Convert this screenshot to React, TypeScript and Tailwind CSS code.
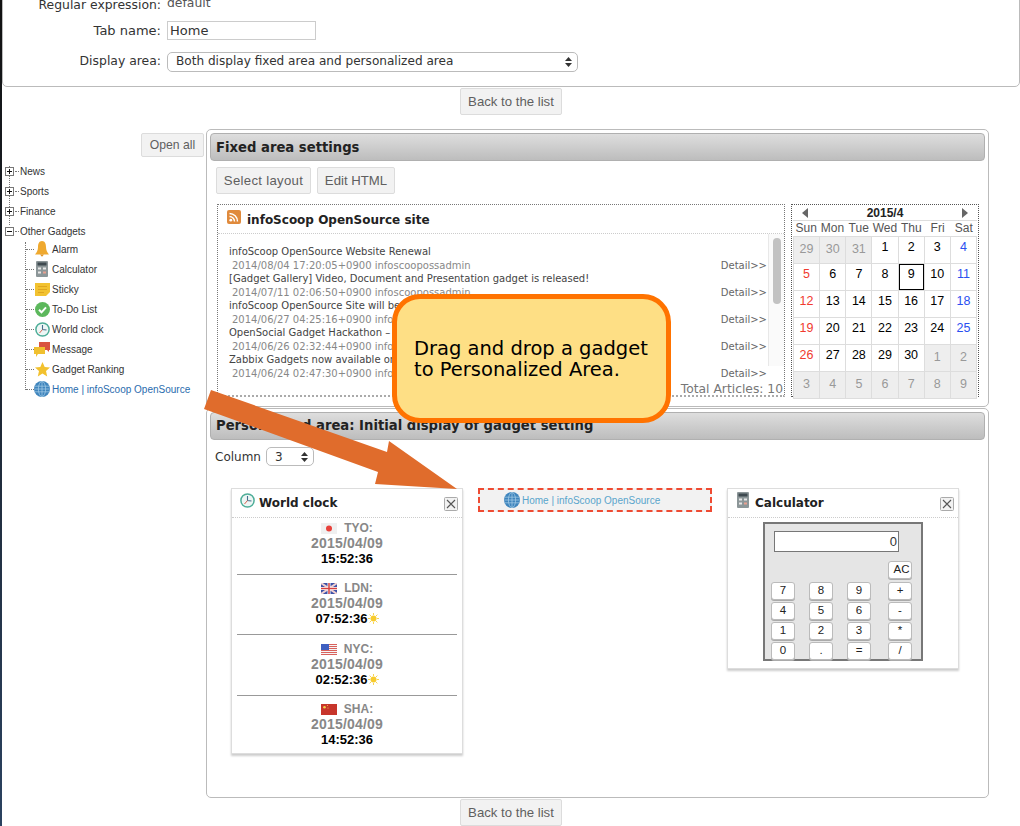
const verdana = "font-['DejaVu_Sans',Verdana,sans-serif]";

function PlusBox({ minus }: { minus?: boolean }) {
  return (
    <svg width="9" height="9" viewBox="0 0 9 9" className="shrink-0">
      <rect x="0.5" y="0.5" width="8" height="8" fill="#fff" stroke="#777" />
      <path d="M2 4.5h5" stroke="#111" />
      {!minus && <path d="M4.5 2v5" stroke="#111" />}
    </svg>
  );
}

function Bell() {
  return (
    <svg width="16" height="16" viewBox="0 0 16 16">
      <path d="M8 0c3 0 4 3 4 6 0 3 1 5 3 7.500H1c2-2.500 3-4.500 3-7.500 0-3 1-6 4-6z" fill="#efa92f" />
      <path d="M6 13.500h4L8 15.800z" fill="#e0901e" />
    </svg>
  );
}

function CalcIcon() {
  return (
    <svg width="12" height="16" viewBox="0 0 12 16">
      <rect x="0" y="0" width="12" height="16" rx="1" fill="#8c9698" />
      <rect x="1.500" y="1.500" width="9" height="3" fill="#3f4a50" />
      <rect x="2" y="6.500" width="3" height="2" fill="#e8e8e8" />
      <rect x="7" y="6.500" width="3" height="2" fill="#e8e8e8" />
      <rect x="2" y="10.500" width="3" height="2" fill="#e8e8e8" />
      <rect x="7" y="10.500" width="3" height="2" fill="#e8a090" />
    </svg>
  );
}

function StickyIcon() {
  return (
    <svg width="15" height="14" viewBox="0 0 15 14">
      <path d="M0 1h15v9l-4 4H0z" fill="#f2c230" />
      <path d="M3 4.500h9M3 7.500h9M3 10.500h6" stroke="#dfa51f" />
    </svg>
  );
}

function CheckIcon() {
  return (
    <svg width="15" height="15" viewBox="0 0 15 15">
      <circle cx="7.500" cy="7.500" r="7.500" fill="#5cb85c" />
      <path d="M4 7.800l2.500 2.500 4.500-5" fill="none" stroke="#fff" strokeWidth="2" />
    </svg>
  );
}

function ClockIcon() {
  return (
    <svg width="15" height="15" viewBox="0 0 15 15">
      <circle cx="7.500" cy="7.500" r="6.600" fill="#eef6f5" stroke="#4fae99" strokeWidth="1.500" />
      <path d="M7.500 3v4.500l4 .5" fill="none" stroke="#44708f" strokeWidth="1.100" />
      <path d="M7.500 7.500L4.500 11" stroke="#d9604c" />
    </svg>
  );
}

function MessageIcon() {
  return (
    <svg width="16" height="15" viewBox="0 0 16 15">
      <path d="M5 0h11v8h-1v2l-2-2H5z" fill="#d9533f" />
      <path d="M0 5h11v7H4l-2 3v-3H0z" fill="#f0c02f" />
    </svg>
  );
}

function StarIcon() {
  return (
    <svg width="15" height="15" viewBox="0 0 15 15">
      <path d="M7.500 0l2.200 5 5.300.5-4 3.500 1.200 5.500-4.700-2.900-4.700 2.900L4 9 0 5.500 5.300 5z" fill="#f2c12e" />
    </svg>
  );
}

function GlobeIcon() {
  return (
    <svg width="16" height="16" viewBox="0 0 16 16" className="shrink-0">
      <circle cx="8" cy="8" r="8" fill="#3f85bd" />
      <g fill="none" stroke="#a9d0ea" strokeWidth="0.7">
        <ellipse cx="8" cy="8" rx="3.600" ry="7.600" />
        <path d="M8 .4v15.200M.6 5.200h14.800M.6 10.800h14.800M.4 8h15.200" />
      </g>
    </svg>
  );
}

function RssIcon() {
  return (
    <svg width="14" height="14" viewBox="0 0 14 14" className="-mt-[6px] shrink-0">
      <rect width="14" height="14" rx="2" fill="#e08a3c" />
      <circle cx="3.800" cy="10.200" r="1.400" fill="#fff" />
      <path d="M2.500 6.500a5 5 0 0 1 5 5M2.500 3.500a8 8 0 0 1 8 8" fill="none" stroke="#fff" strokeWidth="1.400" />
    </svg>
  );
}

function CloseBox() {
  return (
    <svg width="14" height="14" viewBox="0 0 14 14" className="shrink-0">
      <rect x="0.500" y="0.500" width="13" height="13" rx="1" fill="#f2f2f2" stroke="#aaa" />
      <path d="M3 3l8 8M11 3l-8 8" stroke="#555" strokeWidth="1.100" />
    </svg>
  );
}

function Sun() {
  return (
    <svg width="11" height="11" viewBox="0 0 11 11" className="shrink-0">
      <circle cx="5.500" cy="5.500" r="3" fill="#f7cb2d" />
      <path d="M5.500 0v2M5.500 9v2M0 5.500h2M9 5.500h2M1.600 1.600L3 3M8 8l1.400 1.400M1.600 9.400L3 8M8 3l1.400-1.400" stroke="#f7cf3d" strokeWidth="0.900" />
    </svg>
  );
}

function Flag({ city }: { city: string }) {
  if (city === "TYO")
    return (
      <svg width="16" height="11" viewBox="0 0 16 11" className="shrink-0">
        <rect width="16" height="11" fill="#f0f0f0" />
        <circle cx="8" cy="5.500" r="3" fill="#e8413b" />
      </svg>
    );
  if (city === "LDN")
    return (
      <svg width="16" height="11" viewBox="0 0 16 11" className="shrink-0">
        <rect width="16" height="11" fill="#3d52a8" />
        <path d="M0 0l16 11M16 0L0 11" stroke="#f0d0d0" strokeWidth="2" />
        <path d="M8 0v11M0 5.500h16" stroke="#fff" strokeWidth="3" />
        <path d="M8 0v11M0 5.500h16" stroke="#d5403f" strokeWidth="1.500" />
      </svg>
    );
  if (city === "NYC")
    return (
      <svg width="16" height="11" viewBox="0 0 16 11" className="shrink-0">
        <rect width="16" height="11" fill="#f5f5f5" />
        <path d="M0 .5h16M0 2.500h16M0 4.500h16M0 6.500h16M0 8.500h16M0 10.500h16" stroke="#d9615c" />
        <rect width="8" height="6" fill="#3f5fc0" />
      </svg>
    );
  return (
    <svg width="16" height="11" viewBox="0 0 16 11" className="shrink-0">
      <rect width="16" height="11" fill="#c7352b" />
      <circle cx="3.500" cy="3.200" r="1.300" fill="#f3d24b" />
      <circle cx="6.500" cy="1.500" r="0.500" fill="#f3d24b" />
      <circle cx="7" cy="4" r="0.500" fill="#f3d24b" />
    </svg>
  );
}

function Btn({ children, className = "" }: { children: React.ReactNode; className?: string }) {
  return (
    <button className={`flex items-center justify-center rounded-[2px] border border-[#dcdcdc] bg-[#f2f2f2] font-['Liberation_Sans',Arial,sans-serif] text-[#5f5f5f] ${className}`}>
      {children}
    </button>
  );
}

function SectionHead({ children }: { children: React.ReactNode }) {
  return (
    <div className={`flex h-[28px] items-center rounded-[4px] border border-[#b0b0b0] bg-gradient-to-b from-[#dedede] to-[#bdbdbd] px-[5px] text-[13.200px] font-bold text-[#222] ${verdana}`}>
      {children}
    </div>
  );
}

function UpDown() {
  return (
    <svg width="7" height="10" viewBox="0 0 7 10" className="shrink-0">
      <path d="M3.500 0L7 4H0zM3.500 10L0 6h7z" fill="#333" />
    </svg>
  );
}

const folders = ["News", "Sports", "Finance"];

const gadgets = [
  { name: "Alarm", icon: <Bell /> },
  { name: "Calculator", icon: <CalcIcon /> },
  { name: "Sticky", icon: <StickyIcon /> },
  { name: "To-Do List", icon: <CheckIcon /> },
  { name: "World clock", icon: <ClockIcon /> },
  { name: "Message", icon: <MessageIcon /> },
  { name: "Gadget Ranking", icon: <StarIcon /> },
];

function Tree() {
  return (
    <div className="relative mt-[4px] font-['Liberation_Sans',Arial,sans-serif] text-[10px] text-[#333]">
      <div className="absolute left-[9px] top-[5px] h-[59px] border-l border-dotted border-[#777]" />
      <div className="absolute left-[25px] top-[81px] h-[148px] border-l border-dotted border-[#777]" />
      {folders.map((f) => (
        <div key={f} className="relative flex h-[20px] items-center pl-[5px]">
          <PlusBox />
          <span className="mx-[1px] w-[4px] border-t border-dotted border-[#777]" />
          <span>{f}</span>
        </div>
      ))}
      <div className="relative flex h-[20px] items-center pl-[5px]">
        <PlusBox minus />
        <span className="mx-[1px] w-[4px] border-t border-dotted border-[#777]" />
        <span>Other Gadgets</span>
      </div>
      <div className="-mt-[2px]">
        {gadgets.map((g) => (
          <div key={g.name} className="flex h-[20px] items-center pl-[26px]">
            <span className="w-[8px] border-t border-dotted border-[#777]" />
            <span className="flex w-[18px] justify-center pr-[2px]">{g.icon}</span>
            <span>{g.name}</span>
          </div>
        ))}
        <div className="flex h-[20px] items-center pl-[26px]">
          <span className="w-[8px] border-t border-dotted border-[#777]" />
          <GlobeIcon />
          <span className="ml-[2px] text-[#2a6cae]">Home | infoScoop OpenSource</span>
        </div>
      </div>
    </div>
  );
}

const articles = [
  ["infoScoop OpenSource Website Renewal", "2014/08/04 17:20:05+0900 infoscoopossadmin"],
  ["[Gadget Gallery] Video, Document and Presentation gadget is released!", "2014/07/11 02:06:50+0900 infoscoopossadmin"],
  ["infoScoop OpenSource Site will be", "2014/06/27 04:25:16+0900 infoscoopossadmin"],
  ["OpenSocial Gadget Hackathon – ", "2014/06/26 02:32:44+0900 infoscoopossadmin"],
  ["Zabbix Gadgets now available on", "2014/06/24 02:47:30+0900 infoscoopossadmin"],
];

function RssGadget() {
  return (
    <div className={`relative h-[193px] w-[568px] overflow-hidden border-x border-t border-dotted border-[#777] border-b-2 border-b-[#aaa] ${verdana}`}>
      <div className="flex h-[29px] items-center gap-[4px] border-b border-dotted border-[#ccc] pl-[9px] pt-[2px]">
        <RssIcon />
        <span className="ml-[2px] text-[12px] font-bold text-[#222]">infoScoop OpenSource site</span>
      </div>
      <div className="flex h-[132px]">
        <div className="w-[550px] pl-[11px] pt-[11px] text-[10px] leading-[13.500px]">
          {articles.map(([title, meta]) => (
            <div key={meta}>
              <div className="whitespace-nowrap text-[#444]">{title}</div>
              <div className="flex justify-between whitespace-nowrap pl-[3px] text-[#888]">
                <span>{meta}</span>
                <span className="pr-[1px] text-[#666]">Detail&gt;&gt;</span>
              </div>
            </div>
          ))}
        </div>
        <div className="w-[16px] border-l border-[#e8e8e8] bg-[#fafafa] pl-[4px] pt-[4px]">
          <div className="h-[66px] w-[8px] rounded-[4px] bg-[#c2c2c2]" />
        </div>
      </div>
      <div className="absolute bottom-[-2px] right-[1px] bg-white pl-[1px] text-[12.300px] leading-[16px] text-[#777]">Total Articles: 10</div>
    </div>
  );
}

const dayNames = ["Sun", "Mon", "Tue", "Wed", "Thu", "Fri", "Sat"];
const days = [
  29, 30, 31, 1, 2, 3, 4, 5, 6, 7, 8, 9, 10, 11, 12, 13, 14, 15, 16, 17, 18, 19, 20, 21, 22, 23, 24, 25, 26, 27, 28, 29, 30, 1, 2, 3, 4, 5, 6, 7, 8, 9,
];

function dayClass(i: number) {
  if (i < 3 || i >= 33) return "bg-[#eeeeee] text-[#999] pt-[3px]";
  if (i % 7 === 0) return "bg-white text-[#f03a2e]";
  if (i % 7 === 6) return "bg-white text-[#2a4ff0]";
  return "bg-white text-black";
}

function Calendar() {
  return (
    <div className="h-[193px] w-[188px] border border-dotted border-[#555] p-[1px] font-['Liberation_Sans',Arial,sans-serif]">
      <div className="flex h-[14px] items-center justify-between px-[9px] text-[12px] font-bold leading-none text-[#222]">
        <svg width="6" height="10" viewBox="0 0 6 10"><path d="M6 0v10L0 5z" fill="#666" /></svg>
        <span>2015/4</span>
        <svg width="6" height="10" viewBox="0 0 6 10"><path d="M0 0v10l6-5z" fill="#666" /></svg>
      </div>
      <div className="grid grid-cols-7 border-t border-[#ddd] text-center text-[12px] leading-[15px] text-[#555]">
        {dayNames.map((d) => (
          <span key={d} className="whitespace-nowrap">{d}</span>
        ))}
      </div>
      <div className="grid grid-cols-7 gap-[1px] bg-[#dddddd] p-[1px] text-center text-[12.500px]">
        {days.map((d, i) => (
          <div key={i} className={`flex h-[26px] justify-center pt-[1px] ${i === 11 ? "outline outline-1 -outline-offset-1 outline-black" : ""} ${dayClass(i)}`}>
            {d}
          </div>
        ))}
      </div>
    </div>
  );
}

const clocks = [
  { city: "TYO", date: "2015/04/09", time: "15:52:36", sun: false, pad: "" },
  { city: "LDN", date: "2015/04/09", time: "07:52:36", sun: true, pad: "pt-[6px]" },
  { city: "NYC", date: "2015/04/09", time: "02:52:36", sun: true, pad: "pt-[7px]" },
  { city: "SHA", date: "2015/04/09", time: "14:52:36", sun: false, pad: "pt-[6px]" },
];

function CardHead({ icon, title }: { icon: React.ReactNode; title: string }) {
  return (
    <div className={`flex h-[29px] items-center border-b border-dotted border-[#ccc] pl-[7px] pr-[4px] text-[12px] font-bold text-[#222] ${verdana}`}>
      <span className="-mt-[6px] mr-[4px] flex w-[16px] justify-center">{icon}</span>
      <span className="-mt-[1px]">{title}</span>
      <span className="ml-auto pt-[2px]"><CloseBox /></span>
    </div>
  );
}

function WorldClock() {
  return (
    <div className="h-[266px] w-[232px] shrink-0 border border-[#ddd] shadow-[0_2px_2px_rgba(0,0,0,0.2)]">
      <CardHead icon={<ClockIcon />} title="World clock" />
      <div className="px-[5px] pt-[3px] font-['Liberation_Sans',Arial,sans-serif] text-[12px] leading-[15px]">
        {clocks.map((c, i) => (
          <div key={c.city} className={`pb-[8px] text-center ${c.pad} ${i < 3 ? "border-b border-[#999]" : ""}`}>
            <div className="flex items-center justify-center gap-[7px] font-bold text-[#888]">
              <Flag city={c.city} />
              <span>{c.city}:</span>
            </div>
            <div className="text-[14px] font-bold tracking-[0.2px] text-[#888]">{c.date}</div>
            <div className="flex items-center justify-center text-[13px] font-bold text-black">
              {c.time}
              {c.sun && <Sun />}
            </div>
          </div>
        ))}
      </div>
    </div>
  );
}

const calcRows = [
  ["7", "8", "9", "+"],
  ["4", "5", "6", "-"],
  ["1", "2", "3", "*"],
  ["0", ".", "=", "/"],
];

function CalcKey({ label, className = "" }: { label: string; className?: string }) {
  return (
    <div className={`flex h-[18px] w-[24px] items-center justify-center rounded-[3px] border border-[#bbb] bg-white text-[11.500px] leading-none text-[#222] shadow-[0_1px_0_#aaa] ${className}`}>
      {label}
    </div>
  );
}

function Calculator() {
  return (
    <div className="h-[181px] w-[232px] shrink-0 border border-[#ddd] shadow-[0_2px_2px_rgba(0,0,0,0.2)]">
      <CardHead icon={<CalcIcon />} title="Calculator" />
      <div className="pl-[35px] pt-[4px]">
        <div className="h-[139px] w-[160px] border-2 border-[#777] bg-[#e5e5e5] pl-[6px] pt-[7px] font-['Liberation_Sans',Arial,sans-serif]">
          <div className="ml-[3px] h-[21px] w-[125px] border border-[#777] bg-white pr-[1px] text-right text-[13px] leading-[19px] text-[#333]">0</div>
          <div className="mt-[9px] grid w-[141px] grid-cols-[38px_38px_41px_24px] gap-y-[2px]">
            <CalcKey label="AC" className="col-start-4 mb-[1px] pl-[3px]" />
            {calcRows.flat().map((k) => (
              <CalcKey key={k} label={k} />
            ))}
          </div>
        </div>
      </div>
    </div>
  );
}

export default function App() {
  return (
    <div className={`relative h-[826px] w-[1020px] overflow-hidden bg-white ${verdana}`}>
      <div className="absolute inset-y-0 left-0 w-[2px] bg-gradient-to-b from-[#111] to-[#2b4260]" />

      <div className="ml-[2px] -mt-[4px] h-[91px] rounded-b-[5px] border border-[#bbb] text-[12.400px] text-[#333]">
        <div className="flex h-[16px] items-center">
          <span className="w-[158px] text-right">Regular expression:</span>
          <span className="ml-[6px] -mt-[3px] text-[#555]">default</span>
        </div>
        <div className="mt-[8px] flex items-center">
          <span className="w-[158px] text-right text-[13px]">Tab name:</span>
          <input readOnly value="Home" className="ml-[6px] h-[19px] w-[149px] border border-[#ccc] px-[2px] text-[13px] text-[#333]" />
        </div>
        <div className="mt-[11px] flex items-center">
          <span className="w-[158px] text-right">Display area:</span>
          <div className="ml-[6px] flex h-[20px] w-[411px] items-center justify-between rounded-[5px] border border-[#bbb] pl-[8px] pr-[5px] text-[12.100px]">
            <span>Both display fixed area and personalized area</span>
            <UpDown />
          </div>
        </div>
      </div>

      <div className="mt-[1px] flex justify-center pl-[2px]">
        <Btn className="h-[27px] w-[102px] text-[13.200px]">Back to the list</Btn>
      </div>

      <div className="mt-[14px] flex">
        <div className="w-[206px] shrink-0">
          <div className="mt-[4px] flex justify-end pr-[2px]">
            <Btn className="h-[24px] w-[63px] text-[12.200px]">Open all</Btn>
          </div>
          <Tree />
        </div>

        <div className="w-[783px] shrink-0">
          <div className="h-[278px] rounded-[5px] border border-[#bbb] px-[3px] pt-[3px]">
            <SectionHead><span className="pt-[1px]">Fixed area settings</span></SectionHead>
            <div className="mt-[6px] flex gap-[6px] pl-[6px]">
              <Btn className="h-[27px] w-[95px] text-[13.200px] tracking-[0.3px]">Select layout</Btn>
              <Btn className="h-[27px] w-[78px] text-[13.200px]">Edit HTML</Btn>
            </div>
            <div className="mt-[10px] flex gap-[6px] pl-[7px]">
              <RssGadget />
              <Calendar />
            </div>
          </div>

          <div className="mt-[1px] h-[390px] rounded-[5px] border border-[#bbb] px-[3px] pt-[3px]">
            <SectionHead>Personalized area: Initial display of gadget setting</SectionHead>
            <div className="mt-[7px] flex items-center pl-[5px] text-[12px] text-[#333]">
              <span>Column</span>
              <div className="ml-[5px] flex h-[19px] w-[48px] items-center justify-between rounded-[5px] border border-[#bbb] pl-[8px] pr-[5px]">
                <span>3</span>
                <UpDown />
              </div>
            </div>
            <div className="mt-[22px] flex items-start gap-[15px] pl-[21px]">
              <WorldClock />
              <div className="flex h-[24px] w-[234px] shrink-0 items-center border-2 border-dashed border-[#ef4b33] bg-[#f2f2f2] pl-[24px] font-['Liberation_Sans',Arial,sans-serif] text-[10px] text-[#5aa5cc]">
                <GlobeIcon />
                <span className="ml-[2px]">Home | infoScoop OpenSource</span>
              </div>
              <Calculator />
            </div>
          </div>

          <div className="mt-[1px] flex justify-start pl-[254px]">
            <Btn className="h-[27px] w-[102px] text-[13.200px]">Back to the list</Btn>
          </div>
        </div>
      </div>

      <svg width="1020" height="826" viewBox="0 0 1020 826" className="pointer-events-none absolute left-0 top-0">
        <path d="M211 390L387 452L389 441L457 489L375 484L378 472L204 409Z" fill="#e06c2c" />
      </svg>

      <div className="absolute left-[392px] top-[294px] flex h-[129px] w-[279px] flex-col justify-center rounded-[28px] border-[5px] border-[#ff7300] bg-[#fedf85] pl-[17px] text-[19.500px] leading-[21px] text-black">
        <span>Drag and drop a gadget</span>
        <span>to Personalized Area.</span>
      </div>
    </div>
  );
}
